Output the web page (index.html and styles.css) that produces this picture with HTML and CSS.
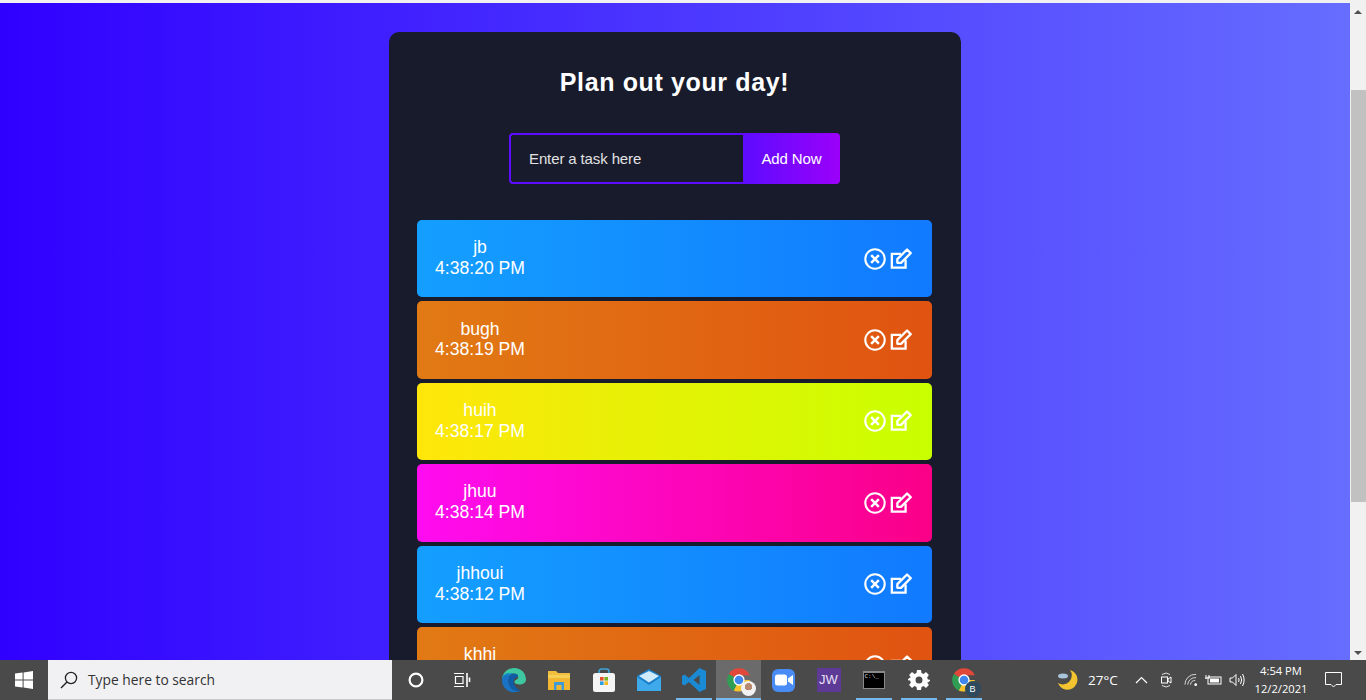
FILE: index.html
```html
<!DOCTYPE html>
<html lang="en">
<head>
<meta charset="utf-8">
<title>Plan out your day!</title>
<link rel="stylesheet" href="styles.css">
</head>
<body>
<svg class="defs" width="0" height="0">
  <defs>
    <symbol id="close" viewBox="0 0 24 24"><circle cx="12" cy="12" r="10.6" fill="none" stroke="currentColor" stroke-width="2.3"/><path d="M7.8 7.8l8.4 8.4M16.2 7.8l-8.4 8.4" fill="none" stroke="currentColor" stroke-width="2.7"/></symbol>
    <symbol id="edit" viewBox="0 0 24 24"><path d="M17 12.5V21.5H2V6.5H12" fill="none" stroke="currentColor" stroke-width="2.5"/><path d="M8 12.2L18.6 1.6 22.6 5.6 12 16.200H8Z" fill="none" stroke="currentColor" stroke-width="2.5" stroke-linejoin="round"/></symbol>
    <symbol id="chrome" viewBox="0 0 24 24"><path d="M12 12L2.600 6.500A11 11 0 0 1 22 7.500H12Z" fill="#e2483a"/><path d="M12 12L7.200 21.900A11 11 0 0 1 2.600 6.500Z" fill="#2f9e54"/><path d="M12 12H22A11 11 0 0 1 7.200 21.900Z" fill="#f5c22e"/><circle cx="12" cy="12" r="5.200" fill="#fff"/><circle cx="12" cy="12" r="4" fill="#3f86ee"/></symbol>
  </defs>
</svg>
<div class="top-strip"></div>
<div class="viewport">
  <main class="page">
    <section class="card">
      <h1 class="title">Plan out your day!</h1>
      <form class="task-form">
        <input class="task-input" type="text" placeholder="Enter a task here">
        <button class="add-btn" type="button">Add Now</button>
      </form>
      <ul class="tasks">
        <li class="task blue"><div class="task-text">jb<br>4:38:20 PM</div><div class="task-icons"><svg class="ico"><use href="#close"/></svg><svg class="ico"><use href="#edit"/></svg></div></li>
        <li class="task orange"><div class="task-text">bugh<br>4:38:19 PM</div><div class="task-icons"><svg class="ico"><use href="#close"/></svg><svg class="ico"><use href="#edit"/></svg></div></li>
        <li class="task yellow"><div class="task-text">huih<br>4:38:17 PM</div><div class="task-icons"><svg class="ico"><use href="#close"/></svg><svg class="ico"><use href="#edit"/></svg></div></li>
        <li class="task pink"><div class="task-text">jhuu<br>4:38:14 PM</div><div class="task-icons"><svg class="ico"><use href="#close"/></svg><svg class="ico"><use href="#edit"/></svg></div></li>
        <li class="task blue"><div class="task-text">jhhoui<br>4:38:12 PM</div><div class="task-icons"><svg class="ico"><use href="#close"/></svg><svg class="ico"><use href="#edit"/></svg></div></li>
        <li class="task orange"><div class="task-text">khhi</div><div class="task-icons"><svg class="ico"><use href="#close"/></svg><svg class="ico"><use href="#edit"/></svg></div></li>
      </ul>
    </section>
  </main>
  <div class="scrollbar">
    <span class="arrow-up"></span>
    <span class="thumb"></span>
    <span class="arrow-down"></span>
  </div>
</div>
<footer class="taskbar">
  <div class="start">
    <svg width="18" height="18" viewBox="0 0 18 18"><path fill="#fff" d="M0 2.600L7.600 1.500V8.500H0ZM8.600 1.400L18 0V8.500H8.600ZM0 9.500H7.600V16.500L0 15.400ZM8.600 9.500H18V18L8.600 16.600Z"/></svg>
  </div>
  <div class="search">
    <svg width="18" height="18" viewBox="0 0 18 18"><circle cx="11" cy="7" r="5.600" fill="none" stroke="#222" stroke-width="1.300"/><path d="M7 11L1 17" stroke="#222" stroke-width="1.500"/></svg>
    <span class="search-text">Type here to search</span>
  </div>
  <div class="tb cortana"><svg width="16" height="16" viewBox="0 0 16 16"><circle cx="8" cy="8" r="6.400" fill="none" stroke="#fff" stroke-width="2.200"/></svg></div>
  <div class="tb taskview"><svg width="18" height="16" viewBox="0 0 18 16"><path d="M1 1.500H11M1 14.500H11M2.500 4.500H10V11.500H2.500Z" fill="none" stroke="#fff" stroke-width="1.200"/><path d="M14 1V15M16.500 5.500V10" fill="none" stroke="#fff" stroke-width="1.600"/></svg></div>
  <div class="tb"><svg width="26" height="26" viewBox="0 0 26 26"><path d="M1 12C2 4 8 1 13.500 1 20 1 25 6 25 12.500 25 16 22 17.500 18.500 17.500 15 17.500 13 16 13.500 14.500 14 12 18 13 17 9 15 5 7 6 1 12Z" fill="#3ec7a0"/><path d="M1 12C2 7 7 5 12 6.500 8 8 6.500 13 8 17.500 10 22 14 24.500 19 24 15 26 7 26 3 20 1.500 17.500 .8 15 1 12Z" fill="#1a72c4"/><path d="M12 6.500C7 5 2 7 1 12 1 10 4 7 9 7.500Z" fill="#1398c8"/><path d="M8 17.500C6.500 13 8 8.500 12 7 16 6 17.500 8.500 17 10 13 9 11 15 14 19 16 21.500 18 23 20 23.500 16 25 10 22.500 8 17.500Z" fill="#0f5da8"/></svg></div>
  <div class="tb"><svg width="24" height="22" viewBox="0 0 24 22"><path d="M1 2H9L11 4H23V8H1Z" fill="#f1bf3d"/><path d="M1 6H23V21H1Z" fill="#f6cf57"/><path d="M1 9H23V21H1Z" fill="#f2b632"/><path d="M7 13H17V21H14.500V16H9.500V21H7Z" fill="#3d9bd8"/></svg></div>
  <div class="tb"><svg width="24" height="26" viewBox="0 0 24 26"><path d="M7 7V4.500A2.500 2.500 0 0 1 9.500 2H14.500A2.500 2.500 0 0 1 17 4.500V7" fill="none" stroke="#3ba5d8" stroke-width="1.600"/><rect x="1" y="6" width="22" height="19" rx="2.500" fill="#f5f5f5"/><rect x="8" y="10" width="3.600" height="3.600" fill="#e8502a"/><rect x="12.400" y="10" width="3.600" height="3.600" fill="#7ab51d"/><rect x="8" y="14.400" width="3.600" height="3.600" fill="#2a9fe0"/><rect x="12.400" y="14.400" width="3.600" height="3.600" fill="#f5b81f"/></svg></div>
  <div class="tb"><svg width="26" height="24" viewBox="0 0 26 24"><path d="M1 8L13 1 25 8V22H1Z" fill="#1b7fc9"/><path d="M1 9L13 17 25 9V23H1Z" fill="#3eaaec"/><path d="M3 8L13 3 23 8 13 14.500Z" fill="#cfeafb"/></svg></div>
  <div class="tb running"><svg width="26" height="26" viewBox="0 0 26 26"><path d="M18.500 1L25 4V22L18.500 25 8 15 3.500 18.500 1 17V9L3.500 7.500 8 11ZM18.500 8L12.500 13 18.500 18Z" fill="#1a8ad4"/></svg></div>
  <div class="tb running active"><span class="stack"><svg class="chrome" width="26" height="26"><use href="#chrome"/></svg><span class="avatar"></span></span></div>
  <div class="tb"><span class="zoom"><svg width="18" height="12" viewBox="0 0 18 12"><rect x="0" y="0.500" width="12" height="11" rx="2.500" fill="#fff"/><path d="M13 4.500L18 1V11L13 7.500Z" fill="#fff"/></svg></span></div>
  <div class="tb"><span class="jw">JW</span></div>
  <div class="tb running"><span class="cmd"><span class="cmd-text">C:\_</span></span></div>
  <div class="tb running"><svg width="22" height="22" viewBox="0 0 22 22"><path fill="#fff" fill-rule="evenodd" d="M9 1H13L13.500 4 15.500 4.900 18 3.100 20.900 6 19.100 8.500 20 10.500 23 11 20 13.500 19.100 13.500 20.900 16 18 18.900 15.500 17.100 13.500 18 13 21H9L8.500 18 6.500 17.100 4 18.900 1.100 16 2.900 13.500 2 11.500-1 11 2 8.500 2.900 8.500 1.100 6 4 3.100 6.500 4.900 8.500 4ZM11 7.500A3.500 3.500 0 1 0 11 14.500 3.500 3.500 0 0 0 11 7.500Z"/></svg></div>
  <div class="tb running"><span class="stack"><svg class="chrome" width="26" height="26"><use href="#chrome"/></svg><span class="badge">B</span></span></div>
  <div class="tray">
    <svg class="moon" width="22" height="22" viewBox="0 0 22 22"><path d="M13 1A10 10 0 1 1 1 14 9 9 0 0 0 13 1Z" fill="#f4c430"/><ellipse cx="6" cy="7" rx="5" ry="2.500" fill="#a9c3d8"/></svg>
    <span class="temp">27°C</span>
    <svg class="t-chev" width="13" height="8" viewBox="0 0 13 8"><path d="M1 7L6.500 1.500 12 7" fill="none" stroke="#fff" stroke-width="1.200"/></svg>
    <svg class="t-meet" width="12" height="18" viewBox="0 0 12 18"><path d="M2 3.500Q6 .500 10 3.500M2 14.500Q6 17.500 10 14.500" fill="none" stroke="#ddd" stroke-width="1"/><rect x="1.500" y="6" width="6" height="6" fill="none" stroke="#fff" stroke-width="1"/><path d="M8 8L11 6V12L8 10Z" fill="none" stroke="#fff" stroke-width="1"/></svg>
    <svg class="t-wifi" width="14" height="14" viewBox="0 0 15 14"><path d="M1 12A11 11 0 0 1 13 1M4 12A8 8 0 0 1 13 4.500M7 12A5 5 0 0 1 12 7.500" fill="none" stroke="#ddd" stroke-width="1"/><circle cx="12.500" cy="12" r="1.500" fill="#fff"/></svg>
    <svg class="t-batt" width="17" height="12" viewBox="0 0 17 12"><rect x="3" y="3" width="13" height="7" fill="none" stroke="#fff" stroke-width="1"/><rect x="5" y="4.500" width="9" height="4" fill="#fff"/><path d="M1 1V5M4 1V4M0 4H5" stroke="#fff" stroke-width="1"/></svg>
    <svg class="t-vol" width="17" height="14" viewBox="0 0 17 14"><path d="M1 5H3.500L7 1.500V12.500L3.500 9H1Z" fill="none" stroke="#fff" stroke-width="1"/><path d="M9.500 5Q10.800 7 9.500 9M11.500 3Q13.800 7 11.500 11M13.500 1Q16.800 7 13.500 13" fill="none" stroke="#fff" stroke-width="1"/></svg>
    <div class="clock"><span>4:54 PM</span><span>12/2/2021</span></div>
    <svg class="t-note" width="17" height="16" viewBox="0 0 17 16"><path d="M.5 .5H16.500V12.500H11L8.500 15 6 12.500H.5Z" fill="none" stroke="#fff" stroke-width="1"/></svg>
  </div>
</footer>
</body>
</html>
```

FILE: styles.css
```css
* { box-sizing: border-box; }
html, body { height: 100%; }
body {
  margin: 0;
  height: 700px;
  overflow: hidden;
  display: flex;
  flex-direction: column;
  font-family: "Liberation Sans", Arial, sans-serif;
  background: #f1f1f1;
}
.defs { display: none; }
.top-strip { height: 3px; flex: none; background: #f1f1f1; }
.viewport { flex: 1; min-height: 0; display: flex; }

.page {
  flex: 1;
  min-width: 0;
  overflow: hidden;
  padding-top: 29px;
  display: flex;
  justify-content: center;
  align-items: flex-start;
  background: linear-gradient(90deg, #3000ff 0%, #666dff 100%);
}
.card {
  width: 572px;
  flex: none;
  padding: 34px 29px 24px 28px;
  background: #181b2b;
  border-radius: 10px;
  display: flex;
  flex-direction: column;
  align-items: stretch;
}
.title {
  margin: 0;
  text-align: center;
  color: #fff;
  font-size: 25px;
  line-height: 32px;
  letter-spacing: 0.63px;
  font-weight: 700;
}
.task-form { display: flex; justify-content: center; margin-top: 35px; }
.task-input {
  width: 234px;
  height: 51px;
  padding: 0 18px;
  border: 2px solid #5d0cff;
  border-right: 0;
  border-radius: 4px 0 0 4px;
  background: transparent;
  color: #fff;
  font: 15px "Liberation Sans", Arial, sans-serif;
  letter-spacing: -0.12px;
  outline: none;
}
.task-input::placeholder { color: #e2e2e2; opacity: 1; }
.add-btn {
  width: 97px;
  height: 51px;
  padding: 0;
  border: 0;
  border-radius: 0 4px 4px 0;
  background: linear-gradient(90deg, #5d0cff 0%, #9b00fa 100%);
  color: #fff;
  font: 15px "Liberation Sans", Arial, sans-serif;
  letter-spacing: -0.1px;
}
.tasks {
  list-style: none;
  margin: 36px 0 0;
  padding: 0;
  display: flex;
  flex-direction: column;
  gap: 4px;
}
.task {
  height: 77.4px;
  flex: none;
  padding: 0 20px 0 18px;
  border-radius: 5px;
  display: flex;
  align-items: center;
  justify-content: space-between;
  color: #fff;
}
.task-text {
  font-size: 17.6px;
  line-height: 20.75px;
  text-align: center;
  width: 90px;
  padding-bottom: 1.5px;
  align-self: center;
}
.task:last-child .task-text { align-self: flex-start; padding-top: 17px; }
.task-icons { display: flex; align-items: center; gap: 4px; }
.ico { width: 22px; height: 22px; display: block; color: #fff; }
.blue { background: linear-gradient(90deg, #149fff 0%, #117aff 100%); }
.orange { background: linear-gradient(90deg, #e17a14 0%, #e05311 100%); }
.yellow { background: linear-gradient(90deg, #ffe60a 0%, #c8ff00 100%); }
.pink { background: linear-gradient(90deg, #ff0cf1 0%, #fa0087 100%); }

.scrollbar {
  width: 16px;
  flex: none;
  display: flex;
  flex-direction: column;
  align-items: center;
  background: #f1f1f1;
}
.arrow-up {
  margin-top: 7px;
  border: 4px solid transparent;
  border-top: 0;
  border-bottom: 4px solid #505050;
  width: 0;
}
.thumb { width: 15px; height: 412px; margin-top: 76px; background: #c1c1c1; }
.arrow-down {
  margin-top: auto;
  margin-bottom: 5px;
  border: 4px solid transparent;
  border-bottom: 0;
  border-top: 4px solid #505050;
  width: 0;
}

.taskbar {
  height: 40px;
  flex: none;
  display: flex;
  align-items: stretch;
  background: #4a4a4a;
  color: #fff;
  font-family: "Open Sans", "Noto Sans", sans-serif;
}
.start { width: 48px; display: flex; align-items: center; justify-content: center; padding-right: 1px; }
.search {
  width: 344px;
  display: flex;
  align-items: center;
  gap: 10px;
  padding-left: 12px;
  background: #f1f1f3;
  border-bottom: 1px solid #c8c8c8;
  color: #333;
}
.search-text { font-size: 13.8px; }
.tb {
  width: 45px;
  flex: none;
  position: relative;
  display: flex;
  align-items: center;
  justify-content: center;
}
.cortana { margin-left: 1px; }
.taskview { margin-right: 6px; width: 47px; }
.running::after {
  content: "";
  position: absolute;
  left: 5px;
  right: 4px;
  bottom: 0;
  height: 2px;
  background: #76b9ed;
}
.active { background: #6b6b6b; }
.active::after { left: 0; right: 0; }
.stack { position: relative; display: block; width: 26px; height: 26px; }
.chrome { display: block; }
.avatar {
  position: absolute;
  right: -4px;
  bottom: -3px;
  width: 15px;
  height: 15px;
  border-radius: 50%;
  background: radial-gradient(circle at 50% 38%, #b98a70 0 30%, #f2f2f2 32% 100%);
}
.badge {
  position: absolute;
  right: -4px;
  bottom: -4px;
  width: 16px;
  height: 16px;
  border-radius: 50%;
  background: #2d4a5e;
  color: #fff;
  font: 9px/16px "Liberation Sans", sans-serif;
  text-align: center;
}
.zoom {
  width: 23px;
  height: 23px;
  border-radius: 6px;
  background: #4a8cf5;
  display: flex;
  align-items: center;
  justify-content: center;
}
.jw {
  width: 24px;
  height: 24px;
  background: #5c3a96;
  color: #e8e0f5;
  font: 13px/24px "Liberation Sans", sans-serif;
  text-align: center;
}
.cmd {
  width: 22px;
  height: 18px;
  background: #000;
  border: 1px solid #8a8a8a;
  border-top-width: 2px;
  display: block;
}
.cmd-text {
  display: block;
  color: #ddd;
  font: 6px/7px "Liberation Mono", monospace;
  padding-left: 1px;
}
.tray { margin-left: auto; display: flex; align-items: center; width: 309px; }
.moon { flex: none; }
.temp { font-size: 13.5px; margin-left: 9px; width: 30px; flex: none; white-space: nowrap; }
.t-chev { margin-left: 17px; flex: none; }
.t-meet { margin-left: 12px; flex: none; }
.t-wifi { margin-left: 12px; flex: none; }
.t-batt { margin-left: 7px; flex: none; }
.t-vol { margin-left: 7px; flex: none; }
.clock {
  width: 60px;
  margin-left: 5px;
  flex: none;
  display: flex;
  flex-direction: column;
  align-items: center;
  font-size: 11.2px;
  line-height: 18px;
  white-space: nowrap;
}
.t-note { margin-left: 14px; flex: none; }
```
